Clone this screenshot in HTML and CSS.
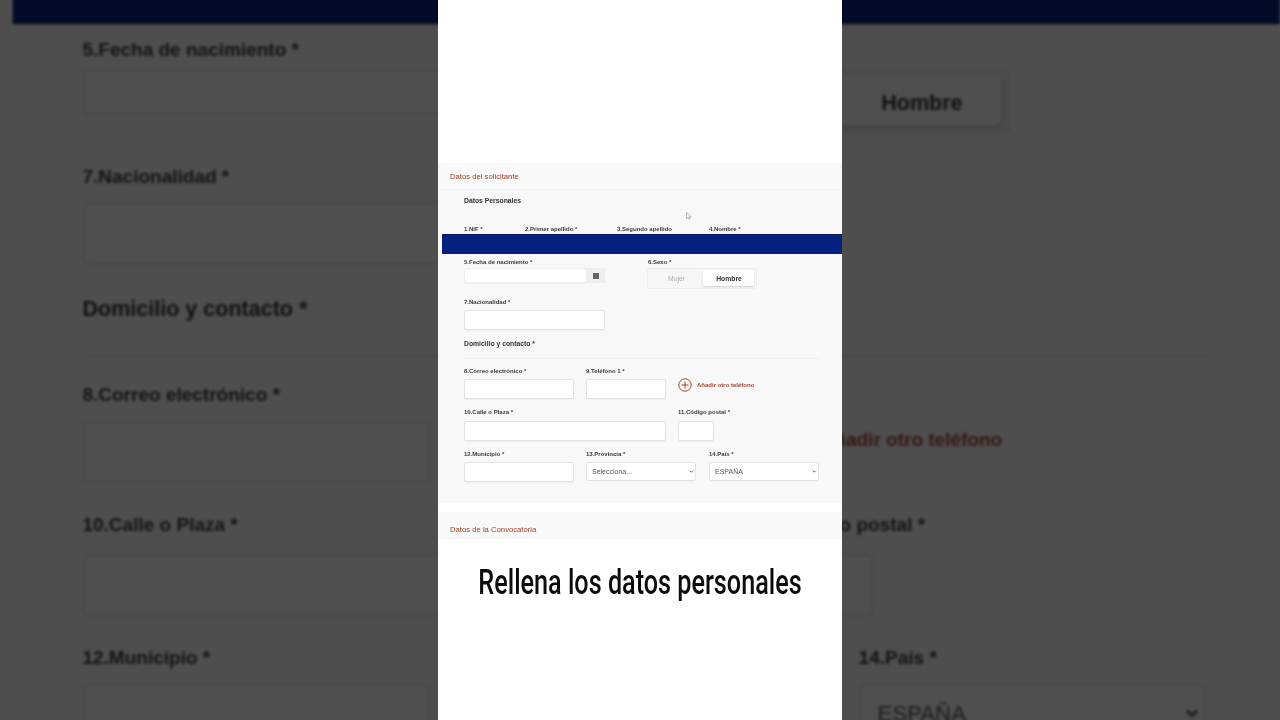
FILE: index.html
```html
<!DOCTYPE html>
<html lang="es">
<head>
  <meta charset="UTF-8">
  <meta name="viewport" content="width=device-width, initial-scale=1.0">
  <title>Rellena los datos personales</title>
  <link rel="stylesheet" href="styles.css">
</head>
<body>
  <div class="stage">

    <!-- fondo: el mismo formulario ampliado, oscuro y desenfocado -->
    <div class="frame frame-backdrop" aria-hidden="true">
      <div class="form">
        <div class="redact-bar"></div>
        <section class="panel">
          <div class="backdrop-spacer"></div>
          <div class="panel-body">
            <div class="row row-birth">
              <div class="field">
                <label>5.Fecha de nacimiento *</label>
                <div class="date-group">
                  <input class="input input-date" type="text">
                  <span class="date-btn"><svg width="6" height="7" viewBox="0 0 6 7"><path d="M0 1h6v6H0z" fill="#666"/></svg></span>
                </div>
              </div>
              <div class="field field-sex">
                <label>6.Sexo *</label>
                <div class="toggle">
                  <span class="toggle-off">Mujer</span>
                  <span class="toggle-on">Hombre</span>
                </div>
              </div>
            </div>
            <div class="row row-nation">
              <div class="field">
                <label>7.Nacionalidad *</label>
                <input class="input w-141" type="text">
              </div>
            </div>
            <h3 class="heading-contact">Domicilio y contacto *</h3>
            <div class="row row-mail">
              <div class="field"><label>8.Correo electrónico *</label><input class="input w-110" type="text"></div>
              <div class="field"><label>9.Teléfono 1 *</label><input class="input w-80" type="text"></div>
              <a class="add-phone">
                <svg width="14" height="14" viewBox="0 0 14 14" fill="none" stroke="#a4442c"><circle cx="7" cy="7" r="6.2"/><path d="M7 3.5v7M3.5 7h7"/></svg>
                Añadir otro teléfono
              </a>
            </div>
            <div class="row row-street">
              <div class="field"><label>10.Calle o Plaza *</label><input class="input w-202" type="text"></div>
              <div class="field"><label>11.Código postal *</label><input class="input w-36" type="text"></div>
            </div>
            <div class="row row-town">
              <div class="field"><label>12.Municipio *</label><input class="input w-110" type="text"></div>
              <div class="field">
                <label>13.Provincia *</label>
                <div class="select-wrap">
                  <select class="select"><option>Selecciona...</option></select>
                  <svg class="chevron" width="4.5" height="3" viewBox="0 0 6 4" fill="none" stroke="#444" stroke-width="1.1"><path d="M.8.8 3 3l2.2-2.2"/></svg>
                </div>
              </div>
              <div class="field field-last">
                <label>14.País *</label>
                <div class="select-wrap">
                  <select class="select"><option>ESPAÑA</option></select>
                  <svg class="chevron" width="4.5" height="3" viewBox="0 0 6 4" fill="none" stroke="#444" stroke-width="1.1"><path d="M.8.8 3 3l2.2-2.2"/></svg>
                </div>
              </div>
            </div>
          </div>
        </section>
      </div>
    </div>

    <!-- video vertical centrado -->
    <div class="frame">
      <div class="form">
        <div class="redact-bar"></div>
        <svg class="cursor" width="6" height="8" viewBox="0 0 6 8" fill="#fff" stroke="#888" stroke-width=".6"><path d="M.6.5v6l1.5-1.3 1.1 2.2 1-.5-1.1-2.1h2z"/></svg>
        <section class="panel">
          <div class="panel-head">Datos del solicitante</div>
          <div class="panel-body">
            <h3 class="heading-first">Datos Personales</h3>
            <div class="row row-names">
              <label class="col-61">1.NIF *</label>
              <label class="col-92">2.Primer apellido *</label>
              <label class="col-92">3.Segundo apellido</label>
              <label>4.Nombre *</label>
            </div>
            <div class="row row-birth">
              <div class="field">
                <label>5.Fecha de nacimiento *</label>
                <div class="date-group">
                  <input class="input input-date" type="text">
                  <span class="date-btn"><svg width="6" height="7" viewBox="0 0 6 7"><path d="M0 1h6v6H0z" fill="#666"/></svg></span>
                </div>
              </div>
              <div class="field field-sex">
                <label>6.Sexo *</label>
                <div class="toggle">
                  <span class="toggle-off">Mujer</span>
                  <span class="toggle-on">Hombre</span>
                </div>
              </div>
            </div>
            <div class="row row-nation">
              <div class="field">
                <label>7.Nacionalidad *</label>
                <input class="input w-141" type="text">
              </div>
            </div>
            <h3 class="heading-contact">Domicilio y contacto *</h3>
            <div class="row row-mail">
              <div class="field"><label>8.Correo electrónico *</label><input class="input w-110" type="text"></div>
              <div class="field"><label>9.Teléfono 1 *</label><input class="input w-80" type="text"></div>
              <a class="add-phone">
                <svg width="14" height="14" viewBox="0 0 14 14" fill="none" stroke="#a4442c"><circle cx="7" cy="7" r="6.2"/><path d="M7 3.5v7M3.5 7h7"/></svg>
                Añadir otro teléfono
              </a>
            </div>
            <div class="row row-street">
              <div class="field"><label>10.Calle o Plaza *</label><input class="input w-202" type="text"></div>
              <div class="field"><label>11.Código postal *</label><input class="input w-36" type="text"></div>
            </div>
            <div class="row row-town">
              <div class="field"><label>12.Municipio *</label><input class="input w-110" type="text"></div>
              <div class="field">
                <label>13.Provincia *</label>
                <div class="select-wrap">
                  <select class="select"><option>Selecciona...</option></select>
                  <svg class="chevron" width="4.5" height="3" viewBox="0 0 6 4" fill="none" stroke="#444" stroke-width="1.1"><path d="M.8.8 3 3l2.2-2.2"/></svg>
                </div>
              </div>
              <div class="field field-last">
                <label>14.País *</label>
                <div class="select-wrap">
                  <select class="select"><option>ESPAÑA</option></select>
                  <svg class="chevron" width="4.5" height="3" viewBox="0 0 6 4" fill="none" stroke="#444" stroke-width="1.1"><path d="M.8.8 3 3l2.2-2.2"/></svg>
                </div>
              </div>
            </div>
          </div>
        </section>
        <section class="panel panel-next">
          <div class="panel-head">Datos de la Convocatoria</div>
        </section>
      </div>
      <div class="caption">Rellena los datos personales</div>
    </div>

  </div>
</body>
</html>
```

FILE: styles.css
```css
* {
  box-sizing: border-box;
}
body {
  margin: 0;
  background: #4f4f4f;
  font-family: 'Liberation Sans', Arial, sans-serif;
}
.stage {
  width: 1280px;
  height: 720px;
  position: relative;
  overflow: hidden;
  display: flex;
  justify-content: center;
}
.frame {
  width: 404px;
  height: 720px;
  background: #fff;
  position: relative;
  overflow: hidden;
  padding-top: 163px;
}
.frame-backdrop {
  position: absolute;
  left: 438px;
  top: 0;
  transform: scale(3.168);
  filter: brightness(0.31);
}
.frame-backdrop .form {
  filter: blur(0.5px);
}
.frame-backdrop .panel {
  background: #fdfdfd;
}
.frame-backdrop .input,
.frame-backdrop .select {
  border-color: #efefef;
  box-shadow: none;
}
.backdrop-spacer {
  height: 70px;
}
.form {
  height: 376px;
  filter: blur(0.6px);
  will-change: transform;
}
.redact-bar {
  position: absolute;
  left: 4px;
  right: 0;
  top: 71px;
  height: 20px;
  background: #05207f;
  border-top: 1px solid #0a1a5c;
  z-index: 2;
}
.cursor {
  position: absolute;
  left: 248px;
  top: 49px;
}
.panel {
  background: #f8f8f8;
}
.panel-next {
  margin-top: 9px;
  height: 27px;
}
.panel-head {
  height: 27px;
  padding-left: 12px;
  display: flex;
  align-items: center;
  font-size: 7.7px;
  color: #a03c24;
  background: #f9f9f9;
  border-bottom: 1px solid #f3f3f3;
}
.panel-next .panel-head {
  padding-top: 8px;
}
.panel-body {
  padding: 0 23px 21px 26px;
}
h3 {
  margin: 0;
  font-size: 6.8px;
  line-height: 10px;
  font-weight: bold;
  color: #333;
}
.heading-first {
  margin-top: 6px;
}
.heading-contact {
  margin-top: 9px;
  padding-bottom: 9px;
  border-bottom: 1px solid #f0f0f0;
}
label {
  display: block;
  font-size: 6px;
  line-height: 8px;
  font-weight: bold;
  color: #3a3a3a;
}
.row {
  display: flex;
  gap: 12px;
}
.row-names {
  margin-top: 19px;
  gap: 0;
}
.col-61 { width: 61px; }
.col-92 { width: 92px; }
.row-birth { margin-top: 24.5px; gap: 0; }
.row-nation { margin-top: 9px; }
.row-mail { margin-top: 8px; }
.row-street { margin-top: 9px; }
.row-town { margin-top: 9px; }
.field {
  display: flex;
  flex-direction: column;
  gap: 4px;
}
.row-birth .field {
  gap: 2.5px;
}
.row-street .field {
  gap: 5px;
}
.field-sex {
  margin-left: 43px;
}
.field-last {
  margin-left: 1px;
}
.input {
  display: block;
  height: 20px;
  padding: 0 5px;
  background: #fff;
  border: 1px solid #e3e3e3;
  border-radius: 2px;
  box-shadow: 0 1px 1px rgba(0, 0, 0, 0.04);
}
.w-36 { width: 36px; }
.w-80 { width: 80px; }
.w-110 { width: 110px; }
.w-141 { width: 141px; }
.w-202 { width: 202px; }
.date-group {
  display: flex;
  width: 141px;
  height: 15px;
}
.input-date {
  width: 123px;
  height: 15px;
  border-color: #eee;
}
.date-btn {
  width: 18px;
  padding-right: 1px;
  background: #eeeeee;
  display: flex;
  align-items: center;
  justify-content: center;
}
.toggle {
  width: 110px;
  height: 21px;
  margin-left: -1px;
  padding: 1px 2px 2px;
  display: flex;
  background: #f6f6f6;
  border: 1px solid #eeeeee;
  border-radius: 2px;
  font-size: 6.8px;
  line-height: 17px;
  text-align: center;
}
.toggle-off {
  width: 54px;
  color: #aaa;
}
.toggle-on {
  width: 52px;
  padding-left: 1px;
  background: #fff;
  color: #333;
  font-weight: bold;
  border-radius: 2px;
  box-shadow: 0 1px 2px rgba(0, 0, 0, 0.15);
}
.add-phone {
  align-self: flex-end;
  margin-bottom: 7px;
  display: flex;
  align-items: center;
  gap: 5px;
  font-size: 6px;
  font-weight: bold;
  color: #a4442c;
}
.select-wrap {
  position: relative;
  width: 110px;
  height: 19px;
}
.select {
  display: block;
  appearance: none;
  width: 100%;
  height: 100%;
  padding: 0 5px;
  background: #fff;
  border: 1px solid #e3e3e3;
  border-radius: 2px;
  font-family: inherit;
  font-size: 7px;
  color: #555;
}
.chevron {
  position: absolute;
  right: 2.5px;
  top: 8px;
}
.caption {
  margin: 0 -40px;
  padding-top: 23px;
  text-align: center;
  font-family: Roboto, sans-serif;
  font-size: 35px;
  font-weight: 500;
  line-height: 42px;
  color: #0c0c0c;
  white-space: nowrap;
  transform: scaleX(0.72);
}
```
